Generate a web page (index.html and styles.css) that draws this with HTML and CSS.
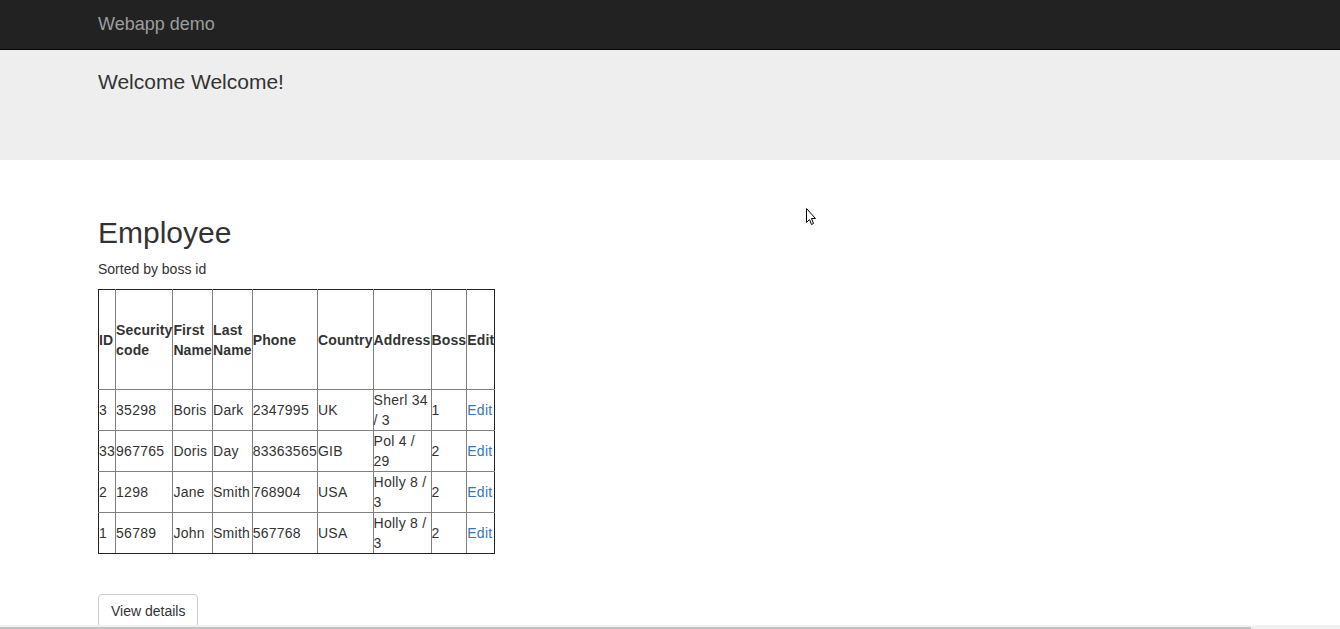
FILE: index.html
```html
<!DOCTYPE html>
<html lang="en">
<head>
<meta charset="utf-8">
<title>Webapp demo</title>
<link rel="stylesheet" href="styles.css">
</head>
<body>
<nav class="navbar">
  <div class="container">
    <a class="brand" href="#">Webapp demo</a>
  </div>
</nav>
<div class="jumbotron">
  <div class="container">
    <p class="welcome">Welcome Welcome!</p>
  </div>
</div>
<main class="container main">
  <h2 class="title">Employee</h2>
  <p class="subtitle">Sorted by boss id</p>
  <table class="emp">
    <thead>
      <tr>
        <th>ID</th><th>Security code</th><th>First Name</th><th>Last Name</th><th>Phone</th><th>Country</th><th>Address</th><th>Boss</th><th>Edit</th>
      </tr>
    </thead>
    <tbody>
      <tr><td>3</td><td>35298</td><td>Boris</td><td>Dark</td><td>2347995</td><td>UK</td><td>Sherl 34 / 3</td><td>1</td><td><a href="#">Edit</a></td></tr>
      <tr><td>33</td><td>967765</td><td>Doris</td><td>Day</td><td>83363565</td><td>GIB</td><td>Pol 4 / 29</td><td>2</td><td><a href="#">Edit</a></td></tr>
      <tr><td>2</td><td>1298</td><td>Jane</td><td>Smith</td><td>768904</td><td>USA</td><td>Holly 8 / 3</td><td>2</td><td><a href="#">Edit</a></td></tr>
      <tr><td>1</td><td>56789</td><td>John</td><td>Smith</td><td>567768</td><td>USA</td><td>Holly 8 / 3</td><td>2</td><td><a href="#">Edit</a></td></tr>
    </tbody>
  </table>
  <p class="actions"><a class="btn" href="#">View details</a></p>
</main>
<svg class="cursor" width="12" height="19" viewBox="0 0 12 19" aria-hidden="true">
  <path d="M0.5 0.5 L0.5 14.5 L3.5 11.5 L5.5 16.5 L7.5 15.5 L5.5 10.5 L9.5 10.5 Z" fill="#fff" stroke="#000" stroke-width="1" stroke-linejoin="miter"/>
</svg>
<div class="hscroll"><div class="hscroll-thumb"></div></div>
</body>
</html>
```
FILE: styles.css
```css
html, body {
  margin: 0;
  padding: 0;
}
body {
  font-family: "Liberation Sans", Arial, sans-serif;
  font-size: 14px;
  line-height: 20px;
  color: #333;
  background: #fff;
}
.container {
  width: 1174px;
  margin: 0 auto;
  padding: 0 15px;
  box-sizing: border-box;
}
.navbar {
  background: #222;
  border-bottom: 1px solid #080808;
  height: 50px;
  box-sizing: border-box;
}
.brand {
  display: inline-block;
  font-size: 18px;
  line-height: 20px;
  padding: 14px 0 15px;
  color: #9d9d9d;
  text-decoration: none;
}
.jumbotron {
  background: #eee;
  height: 110px;
  box-sizing: border-box;
  padding-top: 17px;
}
.welcome {
  margin: 0;
  font-size: 21px;
  line-height: 30px;
}
.main {
  padding-top: 56px;
}
.title {
  margin: 0 0 10px;
  font-size: 30px;
  line-height: 33px;
  font-weight: 500;
}
.subtitle {
  margin: 0 0 10px;
}
.emp {
  border-collapse: collapse;
  border: 1px solid #222;
  width: 1px;
}
.emp th, .emp td {
  border: 1px solid #808080;
  padding: 0;
  text-align: left;
  vertical-align: middle;
  line-height: 20px;
}
.emp tr > :first-child {
  border-left-color: #222;
}
.emp tr > :last-child {
  border-right-color: #222;
}
.emp thead th {
  border-top-color: #222;
}
.emp tbody tr:last-child td {
  border-bottom-color: #222;
}
.emp th {
  font-weight: bold;
  height: 99px;
  letter-spacing: 0.13px;
}
.emp td {
  height: 40px;
  letter-spacing: 0.25px;
}
.emp a {
  color: #337ab7;
  text-decoration: none;
}
.actions {
  margin: 40px 0 0;
}
.btn {
  display: inline-block;
  padding: 6px 12px;
  font-size: 14px;
  line-height: 20px;
  color: #333;
  background: #fff;
  border: 1px solid #ccc;
  border-radius: 4px;
  text-decoration: none;
}
.cursor {
  position: absolute;
  left: 806px;
  top: 208px;
}
.hscroll {
  position: fixed;
  left: 0;
  right: 0;
  bottom: 0;
  height: 4px;
  background: #f1f1f1;
}
.hscroll-thumb {
  position: absolute;
  left: 0;
  bottom: 0;
  width: 1251px;
  height: 2px;
  background: #c1c1c1;
}
```
